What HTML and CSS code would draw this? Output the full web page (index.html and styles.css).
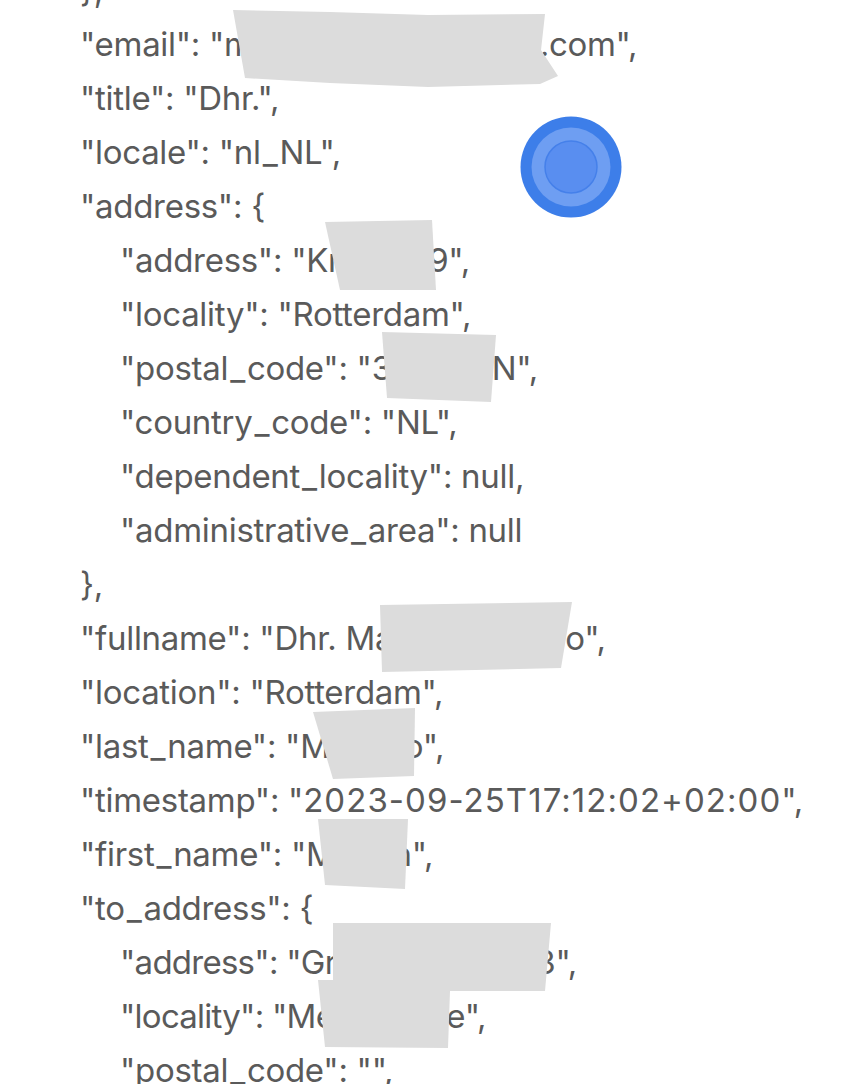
FILE: index.html
```html
<!DOCTYPE html>
<html lang="en">
<head>
<meta charset="utf-8">
<title>JSON</title>
<link rel="stylesheet" href="styles.css">
</head>
<body>
<div class="page">
  <div class="code">
    <div class="line">},</div>
    <div class="line">"email": "m<span class="gap g-email"></span>.com",</div>
    <div class="line">"title": "Dhr.",</div>
    <div class="line">"locale": "nl<span class="u">_</span>NL",</div>
    <div class="line">"address": {</div>
    <div class="line in">"address": "Kr<span class="gap g-addr"></span>9",</div>
    <div class="line in">"locality": "Rotterdam",</div>
    <div class="line in">"postal<span class="u">_</span>code": "3<span class="gap g-postal"></span>N",</div>
    <div class="line in">"country<span class="u">_</span>code": "NL",</div>
    <div class="line in">"dependent<span class="u">_</span>locality": null,</div>
    <div class="line in">"administrative<span class="u">_</span>area": null</div>
    <div class="line">},</div>
    <div class="line">"fullname": "Dhr. Ma<span class="gap g-full"></span>o",</div>
    <div class="line">"location": "Rotterdam",</div>
    <div class="line">"last<span class="u">_</span>name": "M<span class="gap g-last"></span>o",</div>
    <div class="line">"timestamp": "<span class="num">2023-09-25T17:12:02+02:00</span>",</div>
    <div class="line">"first<span class="u">_</span>name": "M<span class="gap g-first"></span>n",</div>
    <div class="line">"to<span class="u">_</span>address": {</div>
    <div class="line in"><span class="narrow">"address": "Gr</span><span class="gap g-toaddr"></span>3",</div>
    <div class="line in"><span class="narrow">"locality": "Me</span><span class="gap g-toloc"></span>e",</div>
    <div class="line in">"postal<span class="u">_</span>code": "",</div>
  </div>

  <svg class="overlay" width="856" height="1084" viewBox="0 0 856 1084" aria-hidden="true">
    <g class="redact">
      <polygon points="233,10 330,12 428,15 545,14 541,50 558,76 540,84 428,87 330,83 245,78"/>
      <polygon points="325,222 432,220 436,290 340,290"/>
      <polygon points="382,332 496,335 491,402 387,398"/>
      <polygon points="380,605 572,602 561,668 382,672"/>
      <polygon points="313,712 415,708 414,776 333,779"/>
      <polygon points="318,819 408,819 405,889 325,885"/>
      <polygon points="333,923 551,923 545,991 450,991 448,1048 325,1047 318,980 333,980"/>
    </g>
    <circle cx="571" cy="167" r="50.5" fill="#3d7ee9"/>
    <circle cx="571" cy="167" r="39.5" fill="#6e9ef2"/>
    <circle cx="571" cy="167" r="26" fill="#598ef0" stroke="#4580ea" stroke-width="1.5"/>
  </svg>
</div>
</body>
</html>
```

FILE: styles.css
```css
html, body {
  margin: 0;
  padding: 0;
  background: #ffffff;
}

.page {
  position: relative;
  width: 856px;
  height: 1084px;
  overflow: hidden;
}

.code {
  display: flex;
  flex-direction: column;
  margin-top: -37px;
  padding-left: 80px;
  font-family: Inter, "Noto Sans", sans-serif;
  font-size: 33px;
  letter-spacing: -0.3px;
  color: #5a5a5a;
}

.line {
  height: 54px;
  line-height: 54px;
  white-space: nowrap;
}

.line.in {
  padding-left: 40px;
}

.u {
  margin: 0 2px;
}

.narrow {
  letter-spacing: -0.75px;
}

.gap {
  display: inline-block;
}

.g-email { width: 287px; }
.g-addr { width: 88px; }
.g-postal { width: 100px; }
.g-full { width: 172px; }
.g-last { width: 74px; }
.g-first { width: 57px; }
.g-toaddr { width: 199px; }
.g-toloc { width: 112px; }

.num {
  letter-spacing: 1.05px;
}

.overlay {
  position: absolute;
  top: 0;
  left: 0;
}

.redact polygon {
  fill: #dcdcdc;
}
```
